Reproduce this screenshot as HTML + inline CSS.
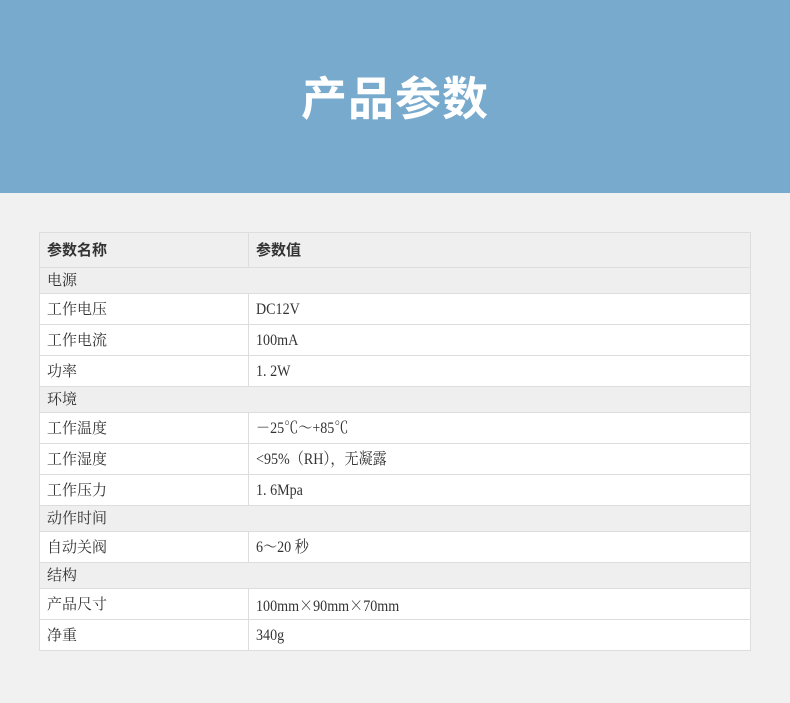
<!DOCTYPE html>
<html><head><meta charset="utf-8"><style>
*{margin:0;padding:0;box-sizing:border-box}
body{width:790px;height:703px;background:#f1f1f1;position:relative;overflow:hidden;font-family:"Liberation Serif","Noto Serif CJK SC",serif;color:#333}
.hd{position:absolute;left:0;top:0;width:790px;height:193px;background:#77aacd}
.hd div{position:absolute;left:0;width:790px;top:69px;text-align:center;color:#fff;font:bold 46px/60px "Liberation Sans","Noto Sans CJK SC",sans-serif;letter-spacing:1px}
.t{position:absolute;left:39px;top:232px;width:712px;border:1px solid #ddd;border-bottom:none}
.r{position:relative;border-bottom:1px solid #ddd;background:#fff;font-size:15px}
.r.s{background:#efefef}
.r .a{position:absolute;left:7px;top:1px}
.r .b{position:absolute;left:216px;top:1px;font-size:16px;display:inline-block;transform:scaleX(0.88);transform-origin:left center;white-space:nowrap}
.r .v{position:absolute;left:208px;top:0;bottom:0;border-left:1px solid #ddd}
.c{font-family:"Noto Serif CJK SC",serif}
</style></head><body>
<div class="hd"><div>产品参数</div></div>
<div class="t">
<div class="r s" style="height:35px;line-height:34px;font-weight:bold;font-family:'Liberation Sans','Noto Sans CJK SC',sans-serif"><span class="a">参数名称</span><span class="v"></span><span class="b" style="font-size:15px;transform:none">参数值</span></div>
<div class="r s" style="height:26px;line-height:25px"><span class="a">电源</span></div>
<div class="r" style="height:31px;line-height:30px"><span class="a">工作电压</span><span class="v"></span><span class="b">DC12V</span></div>
<div class="r" style="height:31px;line-height:30px"><span class="a">工作电流</span><span class="v"></span><span class="b">100mA</span></div>
<div class="r" style="height:31px;line-height:30px"><span class="a">功率</span><span class="v"></span><span class="b">1. 2W</span></div>
<div class="r s" style="height:26px;line-height:25px"><span class="a">环境</span></div>
<div class="r" style="height:31px;line-height:30px"><span class="a">工作温度</span><span class="v"></span><span class="b">－25℃～+85℃</span></div>
<div class="r" style="height:31px;line-height:30px"><span class="a">工作湿度</span><span class="v"></span><span class="b">&lt;95%（RH），无凝露</span></div>
<div class="r" style="height:31px;line-height:30px"><span class="a">工作压力</span><span class="v"></span><span class="b">1. 6Mpa</span></div>
<div class="r s" style="height:26px;line-height:25px"><span class="a">动作时间</span></div>
<div class="r" style="height:31px;line-height:30px"><span class="a">自动关阀</span><span class="v"></span><span class="b">6～20 秒</span></div>
<div class="r s" style="height:26px;line-height:25px"><span class="a">结构</span></div>
<div class="r" style="height:31px;line-height:30px"><span class="a">产品尺寸</span><span class="v"></span><span class="b">100mm<span class="c">×</span>90mm<span class="c">×</span>70mm</span></div>
<div class="r" style="height:31px;line-height:30px"><span class="a">净重</span><span class="v"></span><span class="b">340g</span></div>
</div>
</body></html>
